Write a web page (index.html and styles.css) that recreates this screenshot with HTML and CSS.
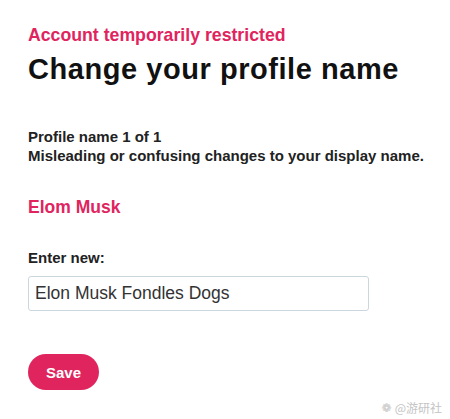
FILE: index.html
```html
<!DOCTYPE html>
<html>
<head>
<meta charset="utf-8">
<link rel="stylesheet" href="styles.css">
</head>
<body>
<main class="page">
  <p class="eyebrow">Account temporarily restricted</p>
  <h1 class="title">Change your profile name</h1>
  <div class="info">
    <p>Profile name 1 of 1</p>
    <p>Misleading or confusing changes to your display name.</p>
  </div>
  <p class="current">Elom Musk</p>
  <label class="label" for="newname">Enter new:</label>
  <input class="field" id="newname" type="text" value="Elon Musk Fondles Dogs">
  <button class="save" type="button">Save</button>
</main>
<div class="watermark"><span class="wm-icon">❁</span>@游研社</div>
</body>
</html>
```
FILE: styles.css
```css
html, body {
  margin: 0;
  padding: 0;
  background: #fff;
}
body {
  font-family: "Liberation Sans", Arial, Helvetica, sans-serif;
  color: #14171a;
  width: 450px;
  height: 419px;
  overflow: hidden;
  position: relative;
}
.page {
  padding: 24px 0 0 28px;
  display: flex;
  flex-direction: column;
  align-items: flex-start;
}
p { margin: 0; }
.eyebrow {
  color: #e0245e;
  font-size: 17.7px;
  font-weight: bold;
  line-height: 22px;
}
.title {
  margin: 6px 0 0;
  font-size: 29px;
  letter-spacing: 0.55px;
  font-weight: bold;
  line-height: 34px;
  color: #111;
}
.info {
  margin-top: 41px;
  font-size: 15px;
  font-weight: bold;
  line-height: 19px;
  color: #222;
}
.current {
  margin-top: 31px;
  color: #e0245e;
  font-size: 17.5px;
  font-weight: bold;
  line-height: 22px;
}
.label {
  margin-top: 30px;
  font-size: 15px;
  font-weight: bold;
  line-height: 20px;
  color: #222;
}
.field {
  margin-top: 8px;
  box-sizing: border-box;
  width: 341px;
  height: 35px;
  border: 1px solid #ccd6dd;
  border-radius: 3px;
  padding: 0 6px;
  font-family: "Liberation Sans", Arial, sans-serif;
  font-size: 17.5px;
  color: #333;
  outline: none;
}
.save {
  margin-top: 43px;
  width: 71px;
  height: 36px;
  border: none;
  border-radius: 18px;
  background: #e0245e;
  color: #fff;
  font-family: "Liberation Sans", Arial, sans-serif;
  font-size: 15px;
  font-weight: bold;
  padding: 0;
}
.watermark {
  position: absolute;
  right: 8px;
  bottom: 3px;
  font-family: "Noto Sans CJK SC", sans-serif;
  font-size: 12px;
  color: #c4c4c4;
  display: flex;
  align-items: center;
  gap: 3px;
}
.wm-icon {
  font-family: "DejaVu Sans", sans-serif;
  font-size: 12px;
}
```
